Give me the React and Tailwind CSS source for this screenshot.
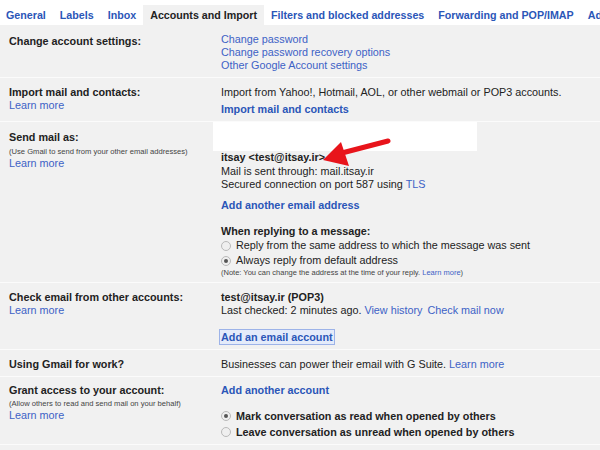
import React from 'react';

const tabs = ['General', 'Labels', 'Inbox', 'Accounts and Import', 'Filters and blocked addresses', 'Forwarding and POP/IMAP', 'Add-ons'];

const Radio = ({ checked }) => (
  <span className="w-[10px] h-[10px] rounded-full border border-[#b9b9b9] bg-[#efefef] flex items-center justify-center shrink-0 mr-[5px]">
    {checked && <span className="w-[4px] h-[4px] rounded-full bg-[#555]" />}
  </span>
);

const Row = ({ children, className = '' }) => (
  <div className={`flex border-b border-[#fbfbfb] ${className}`}>{children}</div>
);

export default function App() {
  return (
    <div className="relative w-[600px] h-[450px] overflow-hidden bg-[#f1f1f1] text-[#222] text-[10.8px] font-['Liberation_Sans',Arial,sans-serif]">
      {/* tab bar */}
      <div className="flex bg-white h-[25px] pt-[5px] -ml-px whitespace-nowrap">
        {tabs.map((t) => (
          <div
            key={t}
            className={`h-[20px] px-[7px] flex items-center text-[10.7px] font-bold ${
              t === 'Accounts and Import' ? 'bg-[#f1f1f1] text-[#222]' : 'text-[#2b56b8]'
            }`}
          >
            {t}
          </div>
        ))}
      </div>

      {/* Change account settings */}
      <Row className="h-[53px] pt-[9px]">
        <div className="w-[221px] pl-[9px] font-bold leading-[14px]">Change account settings:</div>
        <div className="flex flex-col leading-[13px] text-[#3d62c6] -mt-px">
          <span>Change password</span>
          <span>Change password recovery options</span>
          <span>Other Google Account settings</span>
        </div>
      </Row>

      {/* Import */}
      <Row className="h-[44px] pt-[7px]">
        <div className="w-[221px] pl-[9px] flex flex-col">
          <span className="font-bold leading-[14px]">Import mail and contacts:</span>
          <span className="text-[#3d62c6] leading-[12px]">Learn more</span>
        </div>
        <div className="flex flex-col">
          <span className="leading-[14px]">Import from Yahoo!, Hotmail, AOL, or other webmail or POP3 accounts.</span>
          <span className="mt-[3px] leading-[14px] font-bold text-[#2b56b8]">Import mail and contacts</span>
        </div>
      </Row>

      {/* Send mail as */}
      <Row className="h-[161px]">
        <div className="w-[221px] pl-[9px] pt-[8px] flex flex-col">
          <span className="font-bold leading-[14px]">Send mail as:</span>
          <span className="mt-[3px] text-[7.6px] leading-[10px] text-[#444]">(Use Gmail to send from your other email addresses)</span>
          <span className="text-[#3d62c6] leading-[12px]">Learn more</span>
        </div>
        <div className="flex flex-col">
          <div className="-ml-[8px] w-[264px] h-[29px] bg-white" />
          <div className="leading-[13.5px]">
            <div className="font-bold">itsay &lt;test@itsay.ir&gt;</div>
            <div>Mail is sent through: mail.itsay.ir</div>
            <div>
              Secured connection on port 587 using <span className="text-[#3d62c6]">TLS</span>
            </div>
          </div>
          <span className="mt-[6px] leading-[14px] font-bold text-[#2b56b8]">Add another email address</span>
          <span className="mt-[12.5px] leading-[14px] font-bold">When replying to a message:</span>
          <div className="flex items-center leading-[15px]">
            <Radio />
            Reply from the same address to which the message was sent
          </div>
          <div className="flex items-center leading-[15px]">
            <Radio checked />
            Always reply from default address
          </div>
          <span className="text-[7.5px] leading-[10px] text-[#444]">
            (Note: You can change the address at the time of your reply. <span className="text-[#3d62c6]">Learn more</span>)
          </span>
        </div>
      </Row>

      {/* Check email */}
      <Row className="h-[67px] pt-[7px]">
        <div className="w-[221px] pl-[9px] flex flex-col">
          <span className="font-bold leading-[14px]">Check email from other accounts:</span>
          <span className="text-[#3d62c6] leading-[12px]">Learn more</span>
        </div>
        <div className="flex flex-col items-start">
          <span className="font-bold leading-[14px]">test@itsay.ir (POP3)</span>
          <span className="leading-[13px]">
            Last checked: 2 minutes ago. <span className="text-[#3d62c6]">View history</span>
            <span className="text-[#3d62c6] ml-[5px]">Check mail now</span>
          </span>
          <span className="mt-[12.5px] -ml-px px-px leading-[14px] font-bold text-[#2b56b8] bg-[#e4ebfa] outline outline-[#9db3e8]">
            Add an email account
          </span>
        </div>
      </Row>

      {/* Gmail for work */}
      <Row className="h-[27px] pt-[7px]">
        <div className="w-[221px] pl-[9px] font-bold leading-[14px]">Using Gmail for work?</div>
        <div className="leading-[14px]">
          Businesses can power their email with G Suite. <span className="text-[#3d62c6]">Learn more</span>
        </div>
      </Row>

      {/* Grant access */}
      <Row className="h-[68px] pt-[6px]">
        <div className="w-[221px] pl-[9px] flex flex-col">
          <span className="font-bold leading-[14px]">Grant access to your account:</span>
          <span className="mt-[2px] text-[7.6px] leading-[10px] text-[#444]">(Allow others to read and send mail on your behalf)</span>
          <span className="text-[#3d62c6] leading-[12px]">Learn more</span>
        </div>
        <div className="flex flex-col">
          <span className="font-bold leading-[14px] text-[#2b56b8]">Add another account</span>
          <div className="mt-[12px] flex items-center leading-[14px] font-bold">
            <Radio checked />
            Mark conversation as read when opened by others
          </div>
          <div className="mt-[2px] flex items-center leading-[14px] font-bold">
            <Radio />
            Leave conversation as unread when opened by others
          </div>
        </div>
      </Row>

      {/* red annotation arrow */}
      <svg className="absolute left-0 top-0 pointer-events-none" width="600" height="450">
        <line x1="388" y1="141" x2="338" y2="154" stroke="#e8141b" strokeWidth="5" strokeLinecap="round" />
        <polygon points="323,160 341,142 349,166" fill="#e8141b" />
      </svg>
    </div>
  );
}
